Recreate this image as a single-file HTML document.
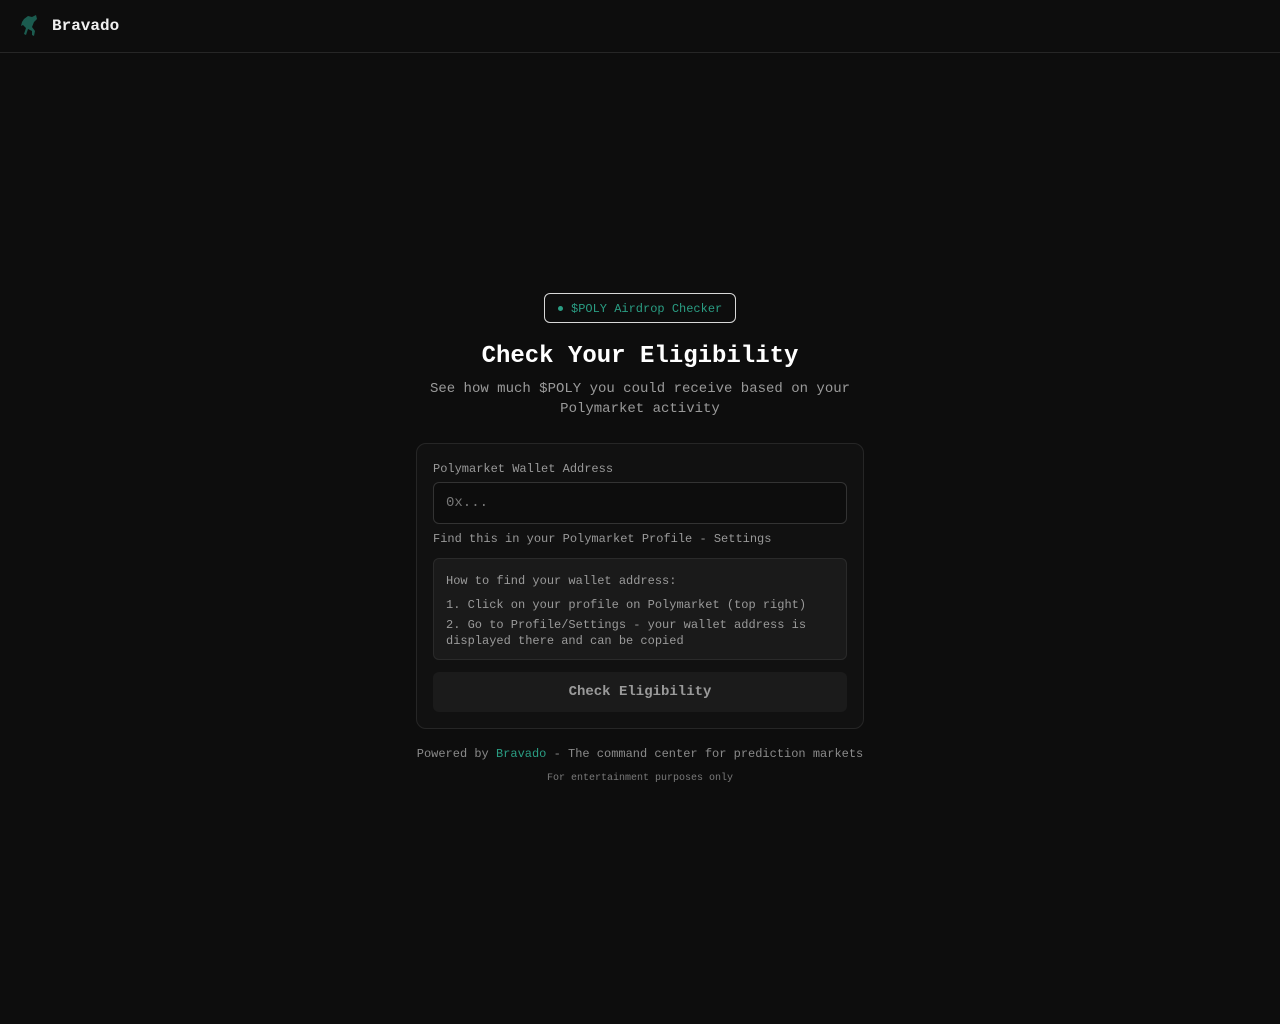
<!DOCTYPE html>
<html><head><meta charset="utf-8"><style>
*{box-sizing:border-box;margin:0;padding:0}
body{width:1280px;height:1024px;background:#0d0d0d;font-family:"Liberation Mono","DejaVu Sans Mono",monospace;color:#e5e5e5;position:relative;overflow:hidden}
.hdr{height:53px;border-bottom:1px solid #262626;position:relative}
.logo{position:absolute;left:18px;top:13px}
.brand{position:absolute;left:52px;top:17px;font-size:16px;font-weight:bold;color:#f0f0f0}
.badge{position:absolute;left:544px;top:293px;width:192px;height:30px;border:1px solid #d8d8d8;border-radius:6px;font-size:12px;color:#2a9d83;line-height:30px;padding-left:26px}
.badge:before{content:"";position:absolute;left:13px;top:12px;width:5px;height:5px;border-radius:50%;background:#2a9d83}
h1{position:absolute;left:0;width:1280px;top:343px;text-align:center;font-size:24px;font-weight:bold;color:#fff}
.sub{position:absolute;left:0;width:1280px;top:379px;text-align:center;font-size:14px;line-height:20px;color:#9a9a9a}
.card{position:absolute;left:416px;top:443px;width:448px;height:286px;border:1px solid #262626;border-radius:10px;background:#111}
.lbl{position:absolute;left:16px;top:18px;font-size:12px;color:#999}
.inp{position:absolute;left:16px;top:38px;width:414px;height:42px;border:1px solid #333;border-radius:6px;background:#0d0d0d;font-size:14px;color:#777;line-height:40px;padding-left:12px}
.hint{position:absolute;left:16px;top:88px;font-size:12px;color:#999}
.box{position:absolute;left:16px;top:114px;width:414px;height:102px;border:1px solid #2a2a2a;border-radius:6px;background:#1a1a1a;font-size:12px;color:#9a9a9a;padding:14px 12px}
.box p{line-height:16px}
.btn{position:absolute;left:16px;top:228px;width:414px;height:40px;border-radius:6px;background:#1b1b1b;font-size:14px;font-weight:bold;color:#9a9a9a;text-align:center;line-height:40px}
.f1{position:absolute;left:0;width:1280px;top:747px;text-align:center;font-size:12px;color:#8a8a8a}
.f1 span{color:#2a9d83}
.f2{position:absolute;left:0;width:1280px;top:773px;text-align:center;font-size:10px;color:#7a7a7a}
</style></head><body>
<div class="hdr">
<svg class="logo" width="24" height="26" viewBox="0 0 24 26"><path d="M6 6 L10 3 L14 4 L18 2 L19 6 L16 9 L14 14 L17 18 L16 23 L14 22 L14 18 L10 16 L8 22 L6 21 L8 15 L5 12 L3 13 L4 9 Z" fill="#1f6f60" opacity="0.8"/></svg>
<div class="brand">Bravado</div>
</div>
<div class="badge">$POLY Airdrop Checker</div>
<h1>Check Your Eligibility</h1>
<div class="sub">See how much $POLY you could receive based on your<br>Polymarket activity</div>
<div class="card">
<div class="lbl">Polymarket Wallet Address</div>
<div class="inp">0x...</div>
<div class="hint">Find this in your Polymarket Profile - Settings</div>
<div class="box">
<p style="margin-bottom:8px">How to find your wallet address:</p>
<p style="margin-bottom:4px">1. Click on your profile on Polymarket (top right)</p>
<p>2. Go to Profile/Settings - your wallet address is displayed there and can be copied</p>
</div>
<div class="btn">Check Eligibility</div>
</div>
<div class="f1">Powered by <span>Bravado</span> - The command center for prediction markets</div>
<div class="f2">For entertainment purposes only</div>
</body></html>
